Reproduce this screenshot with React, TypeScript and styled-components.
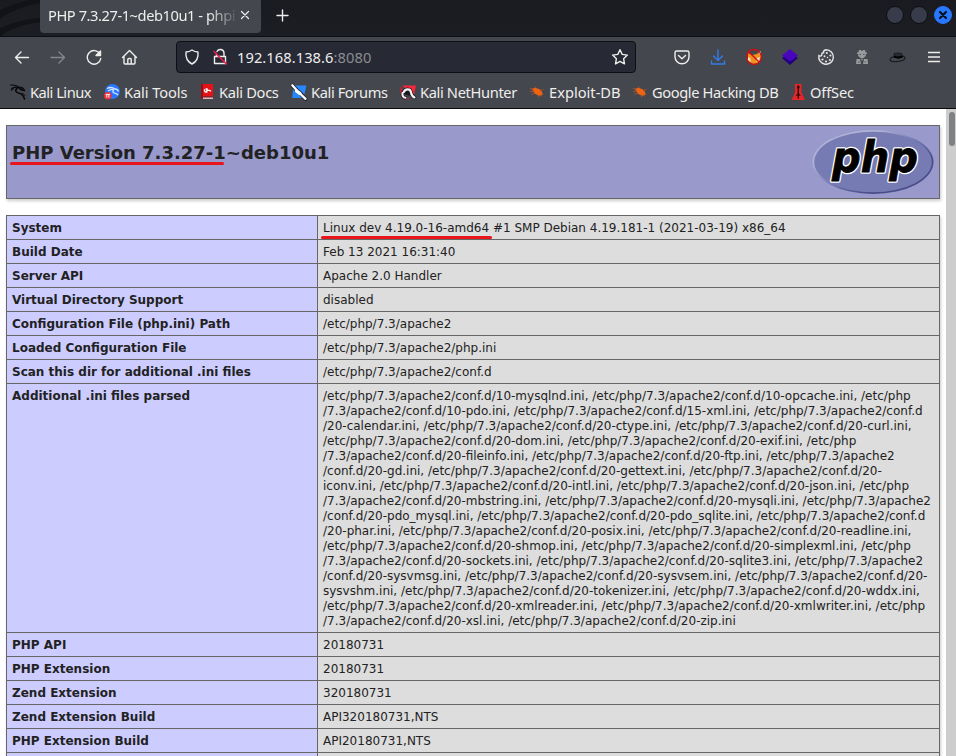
import React from "react";
import styled, { createGlobalStyle } from "styled-components";

const GlobalStyle = createGlobalStyle`
  * { box-sizing: border-box; }
  html, body { margin: 0; padding: 0; overflow: hidden; background: #fff; }
  svg { display: block; flex: none; overflow: visible; }
`;

const Browser = styled.div`
  width: 956px;
  height: 756px;
  display: flex;
  flex-direction: column;
  overflow: hidden;
  background: #fff;
`;

const TabBar = styled.header`
  height: 37px;
  flex: none;
  display: flex;
  align-items: flex-start;
  padding-left: 40px;
  border-bottom: 1px solid #0d0e11;
  background:
    radial-gradient(ellipse 90px 36px at 78px 34px, transparent 95%, #121317 97%, #121317 108%, transparent 110%) 0 0 / 40px 37px no-repeat,
    radial-gradient(ellipse 66px 26px at 60px 46px, transparent 95%, #121317 98%, #121317 112%, transparent 115%) 0 0 / 40px 37px no-repeat,
    linear-gradient(#191b20, #1d1e23);
  font-family: "Noto Sans", sans-serif;
`;

const Tab = styled.div`
  width: 221px;
  height: 33px;
  display: flex;
  align-items: center;
  padding: 0 11px 3px 8px;
  gap: 4px;
  background: #45474e;
  border-radius: 0 0 4px 4px;
  color: #eeeeec;
`;

const TabTitle = styled.span`
  width: 188px;
  white-space: nowrap;
  font-size: 14.67px;
  line-height: 24px;
  letter-spacing: -0.44px;
  mask-image: linear-gradient(90deg, #000 160px, transparent 191px);
`;

const NewTab = styled.div`
  padding: 9px 0 0 15px;
`;

const WindowControls = styled.div`
  display: flex;
  gap: 6px;
  margin-left: auto;
  padding: 6px 4px 0 0;
`;

const WindowButton = styled.span<{ $close?: boolean }>`
  width: 18px;
  height: 18px;
  display: grid;
  place-items: center;
  border-radius: 50%;
  background: ${(p) => (p.$close ? "#2777ff" : "#383c4a")};
  border: 1px solid ${(p) => (p.$close ? "#2777ff" : "#0d0e12")};
`;

const Toolbar = styled.nav`
  height: 41px;
  flex: none;
  display: flex;
  align-items: center;
  padding: 0 13px 1px 13px;
  background: #45474e;
  color: #eeeeec;
`;

const NavButtons = styled.div`
  width: 163px;
  display: flex;
  gap: 18px;
`;

const AddressBar = styled.div`
  width: 460px;
  height: 32px;
  display: flex;
  align-items: center;
  padding: 0 6px 0 7px;
  border: 1px solid #0e0f13;
  border-radius: 4px;
  background: #272935;
  font: 14.67px/24px "Noto Sans", sans-serif;
`;

const Url = styled.span`
  flex: 1;
  padding: 0 0 1px 7px;
  white-space: nowrap;
  letter-spacing: 0.07px;
`;

const Port = styled.span`
  color: #8b8c91;
`;

const LockSlot = styled.span`
  padding-left: 10px;
`;

const Extensions = styled.div`
  display: flex;
  gap: 18px;
  margin-left: auto;
`;

const Bookmarks = styled.nav`
  height: 31px;
  flex: none;
  display: flex;
  padding: 0 9px 2px 10px;
  background: #45474e;
  border-bottom: 1px solid #0b0b0d;
  color: #eeeeec;
`;

const Bookmark = styled.span<{ $width: number; $tracking: number }>`
  width: ${(p) => p.$width}px;
  flex: none;
  display: flex;
  align-items: center;
  gap: 4px;
  white-space: nowrap;
  font: 14.67px/24px "Noto Sans", sans-serif;
  letter-spacing: ${(p) => p.$tracking}px;
`;

const Viewport = styled.main`
  flex: 1;
  min-height: 0;
  display: flex;
`;

const Page = styled.div`
  width: 946px;
  padding: 16px 6px 0;
  color: #222;
  font: 12px/15px "DejaVu Sans", sans-serif;
`;

const Scrollbar = styled.div`
  width: 10px;
  padding: 3px 1px 0 3px;
  background: #cdcdcd;
`;

const ScrollThumb = styled.div`
  height: 34px;
  border-radius: 3px;
  background: #7e8282;
`;

const Banner = styled.section`
  width: 934px;
  height: 74px;
  display: flex;
  justify-content: space-between;
  align-items: flex-start;
  padding: 4px 5px;
  border: 1px solid #666;
  background: #99c;
  box-shadow: 1px 2px 3px #ccc;
`;

const Title = styled.h1`
  position: relative;
  margin: 12px 0 0;
  font-size: 18px;
  line-height: 22px;
  white-space: nowrap;
`;

const Underline = styled.span<{ $width: number; $offset: number }>`
  position: absolute;
  left: -2px;
  top: ${(p) => p.$offset}px;
  width: ${(p) => p.$width}px;
  height: 3px;
  border-radius: 2px;
  background: #e8151b;
`;

const InfoTable = styled.div`
  width: 934px;
  margin-top: 16px;
  border: 1px solid #666;
  border-bottom: 0;
  box-shadow: 1px 2px 3px #ccc;
`;

const InfoRow = styled.div`
  display: grid;
  grid-template-columns: 311px 1fr;
  border-bottom: 1px solid #666;
`;

const Label = styled.div`
  padding: 5px 5px 3px;
  border-right: 1px solid #666;
  background: #ccf;
  font-weight: bold;
`;

const Value = styled.div`
  padding: 5px 5px 3px;
  background: #ddd;
  white-space: pre;
`;

const Marked = styled.span`
  position: relative;
`;

type StrokeIconProps = { color?: string; size?: number; children: React.ReactNode };

const StrokeIcon = ({ color = "#eeeeec", size = 18, children }: StrokeIconProps) => (
  <svg width={size} height={size} viewBox={`0 0 ${size} ${size}`} fill="none" stroke={color} strokeWidth="1.4" strokeLinecap="round" strokeLinejoin="round">
    {children}
  </svg>
);

const DragonIcon = () => (
  <svg width="16" height="16" viewBox="0 0 16 16" fill="none" stroke="#08090a" strokeLinecap="round" strokeLinejoin="round">
    <path d="M.5 1C4 .8 8 1.800 10 3.800" strokeWidth="1.100" />
    <path d="M1.500 4.800C4 2.800 7 2.800 9.500 4" strokeWidth="1.100" />
    <path d="M7 4.500C4.800 6 5.500 8.500 8.500 9c3.500.5 5 2 6 6" strokeWidth="1.600" />
    <path d="M9 4c2-1 4-.5 5.500 2.500l-2.500-.5-2-1" strokeWidth="1.500" />
    <path d="M1 6.500 3.500 5M12 9.500c1.500.3 2.500 1 3 2" strokeWidth=".9" />
  </svg>
);

const ToolsIcon = () => (
  <svg width="16" height="16" viewBox="0 0 16 16">
    <circle cx="8.500" cy="7.500" r="7.400" fill="#2777ff" />
    <path d="M3 4.500c3-1.500 6-1 8 .5 2 0 3 1 3.500 2.500M4 7c3-2 5-1.500 5.500-1-1.500 2 0 3 2 3.300 1.500.3 2 1 2.500 2" fill="none" stroke="#d7e7ff" strokeWidth="1.300" />
    <circle cx="3.800" cy="11.800" r="3.800" fill="#ee3039" />
    <path d="M1.600 10.400h4.400M2.800 10.400v3.300M4.900 10.400v3.300" fill="none" stroke="#fff" strokeWidth=".9" />
  </svg>
);

const DocsIcon = () => (
  <svg width="16" height="16" viewBox="0 0 16 16">
    <path d="M2 0h12v12.500H2z" fill="#e51217" />
    <path d="M2 0h2v15H2zM2 12.500h12v1H2z" fill="#951018" />
    <path d="M4 13.500h10v1.500H4z" fill="#e6bbc0" />
    <path d="M5.500 5.200v1.600q0 1.200 1.500 1.200h.8V6.300h2.400q1.500 0 1.500 1.200M6.500 5h2.200" fill="none" stroke="#fff" strokeWidth="1.300" />
  </svg>
);

const ForumsIcon = () => (
  <svg width="16" height="16" viewBox="0 0 16 16" strokeLinecap="round">
    <path d="M2.500 1.500h13L12.500 14H1.200z" fill="#2688ff" />
    <path d="M1.500 1.500 5.500 6l4 3.500L14.500 15" fill="none" stroke="#20242c" strokeWidth="4" />
    <path d="M1.300 1.300 5.500 6M5 7l4 3M9.500 10l5 4.800" fill="none" stroke="#fff" strokeWidth="2.300" />
    <path d="M5.500 6.800 9 9.500" stroke="#fff" strokeWidth="3.200" />
  </svg>
);

const NetHunterIcon = () => (
  <svg width="16" height="16" viewBox="0 0 16 16" fill="none" strokeLinecap="round">
    <path d="M2.500 1.500h13.500L13.500 13 9 8z" fill="#f7263b" />
    <path d="M1.500 3.500C.5 7 .5 11 4 14.500h4" stroke="#db1939" strokeWidth="1.500" />
    <path d="M3.800 8C5.500 4.300 10.500 4.500 11 8.500c.3 2.500 1.800 4 3.500 5M2.500 9c-.5 3 1 4.800 3 4.700M6 8.800l3 1" stroke="#191a20" strokeWidth="3.600" />
    <path d="M3.800 8C5.500 4.300 10.500 4.500 11 8.500c.3 2.500 1.800 4 3.500 5M2.500 9c-.5 3 1 4.800 3 4.700" stroke="#f6f3f4" strokeWidth="2.100" />
  </svg>
);

const BugIcon = () => (
  <svg width="16" height="16" viewBox="0 0 16 16">
    <path d="M3 4.800 6.500 3.700l4 1.500 2.500 2.500.3 3.300-3.300.7-4.200-2z" fill="#ee6412" />
    <path d="M1 4.500 5 6M6 2.500l1.500 2M11 6.500l3.500-1M12.500 9l2 1M9 10.500l1 3M6 8.500l-3.500 2M5 7l-4 .5M12 10.500l.5 2" stroke="#b95829" strokeWidth=".8" fill="none" />
  </svg>
);

const OffSecIcon = () => (
  <svg width="16" height="16" viewBox="0 0 16 16">
    <path d="M5 0h6.500v8.500L15 16H1.500L5 8.500z" fill="#e52528" />
    <path d="M7.400 1.500h1.800l.5 2-.7 1.200v4.500l1.800 2.800-2-.4.3 2.900H7.500l.2-2.900-2 .4 1.900-2.800V4.700l-.7-1.200z" fill="#2b090b" />
  </svg>
);

const PhpLogo = () => (
  <svg width="122" height="64" viewBox="0 0 122 64">
    <defs>
      <linearGradient id="rim" x1="0" y1="0" x2="1" y2="1">
        <stop offset="0" stopColor="#aeb2d5" />
        <stop offset=".28" stopColor="#aeb2d5" />
        <stop offset=".5" stopColor="#777bb3" />
        <stop offset=".72" stopColor="#484c89" />
        <stop offset="1" stopColor="#484c89" />
      </linearGradient>
    </defs>
    <ellipse cx="61" cy="32" rx="60.500" ry="32" fill="url(#rim)" />
    <ellipse cx="61" cy="32" rx="58.800" ry="30.300" fill="#777bb3" />
    <g fontFamily="DejaVu Sans" fontSize="42" fontStyle="italic" fontWeight="bold">
      <text x="20" y="41.500" fill="#fff" stroke="#fff" strokeWidth="3.600" strokeLinejoin="round" textLength="86" lengthAdjust="spacingAndGlyphs">php</text>
      <text x="20" y="41.500" fill="#000" stroke="#000" strokeWidth=".8" textLength="86" lengthAdjust="spacingAndGlyphs" aria-hidden="true">php</text>
    </g>
  </svg>
);

const bookmarks = [
  { label: "Kali Linux", width: 94, tracking: -0.5, icon: <DragonIcon /> },
  { label: "Kali Tools", width: 95, tracking: -0.1, icon: <ToolsIcon /> },
  { label: "Kali Docs", width: 92, tracking: -0.3, icon: <DocsIcon /> },
  { label: "Kali Forums", width: 109, tracking: -0.4, icon: <ForumsIcon /> },
  { label: "Kali NetHunter", width: 129, tracking: -0.36, icon: <NetHunterIcon /> },
  { label: "Exploit-DB", width: 103, tracking: 0, icon: <BugIcon /> },
  { label: "Google Hacking DB", width: 158, tracking: -0.4, icon: <BugIcon /> },
  { label: "OffSec", width: 80, tracking: -0.15, icon: <OffSecIcon /> },
];

const iniFiles = [
  "/etc/php/7.3/apache2/conf.d/10-mysqlnd.ini, /etc/php/7.3/apache2/conf.d/10-opcache.ini, /etc/php",
  "/7.3/apache2/conf.d/10-pdo.ini, /etc/php/7.3/apache2/conf.d/15-xml.ini, /etc/php/7.3/apache2/conf.d",
  "/20-calendar.ini, /etc/php/7.3/apache2/conf.d/20-ctype.ini, /etc/php/7.3/apache2/conf.d/20-curl.ini,",
  "/etc/php/7.3/apache2/conf.d/20-dom.ini, /etc/php/7.3/apache2/conf.d/20-exif.ini, /etc/php",
  "/7.3/apache2/conf.d/20-fileinfo.ini, /etc/php/7.3/apache2/conf.d/20-ftp.ini, /etc/php/7.3/apache2",
  "/conf.d/20-gd.ini, /etc/php/7.3/apache2/conf.d/20-gettext.ini, /etc/php/7.3/apache2/conf.d/20-",
  "iconv.ini, /etc/php/7.3/apache2/conf.d/20-intl.ini, /etc/php/7.3/apache2/conf.d/20-json.ini, /etc/php",
  "/7.3/apache2/conf.d/20-mbstring.ini, /etc/php/7.3/apache2/conf.d/20-mysqli.ini, /etc/php/7.3/apache2",
  "/conf.d/20-pdo_mysql.ini, /etc/php/7.3/apache2/conf.d/20-pdo_sqlite.ini, /etc/php/7.3/apache2/conf.d",
  "/20-phar.ini, /etc/php/7.3/apache2/conf.d/20-posix.ini, /etc/php/7.3/apache2/conf.d/20-readline.ini,",
  "/etc/php/7.3/apache2/conf.d/20-shmop.ini, /etc/php/7.3/apache2/conf.d/20-simplexml.ini, /etc/php",
  "/7.3/apache2/conf.d/20-sockets.ini, /etc/php/7.3/apache2/conf.d/20-sqlite3.ini, /etc/php/7.3/apache2",
  "/conf.d/20-sysvmsg.ini, /etc/php/7.3/apache2/conf.d/20-sysvsem.ini, /etc/php/7.3/apache2/conf.d/20-",
  "sysvshm.ini, /etc/php/7.3/apache2/conf.d/20-tokenizer.ini, /etc/php/7.3/apache2/conf.d/20-wddx.ini,",
  "/etc/php/7.3/apache2/conf.d/20-xmlreader.ini, /etc/php/7.3/apache2/conf.d/20-xmlwriter.ini, /etc/php",
  "/7.3/apache2/conf.d/20-xsl.ini, /etc/php/7.3/apache2/conf.d/20-zip.ini",
].join("\n");

const rows: [string, React.ReactNode][] = [
  ["System", <Marked key="system">Linux dev 4.19.0-16-amd64 #1 SMP Debian 4.19.181-1 (2021-03-19) x86_64<Underline $width={171} $offset={15} /></Marked>],
  ["Build Date", "Feb 13 2021 16:31:40"],
  ["Server API", "Apache 2.0 Handler"],
  ["Virtual Directory Support", "disabled"],
  ["Configuration File (php.ini) Path", "/etc/php/7.3/apache2"],
  ["Loaded Configuration File", "/etc/php/7.3/apache2/php.ini"],
  ["Scan this dir for additional .ini files", "/etc/php/7.3/apache2/conf.d"],
  ["Additional .ini files parsed", iniFiles],
  ["PHP API", "20180731"],
  ["PHP Extension", "20180731"],
  ["Zend Extension", "320180731"],
  ["Zend Extension Build", "API320180731,NTS"],
  ["PHP Extension Build", "API20180731,NTS"],
  ["", ""],
];

export default function App() {
  return (
    <Browser>
      <GlobalStyle />
      <TabBar>
        <Tab>
          <TabTitle>PHP 7.3.27-1~deb10u1 - phpin</TabTitle>
          <StrokeIcon size={10}><path d="M1.500 1.500l7 7M8.500 1.500l-7 7" strokeWidth="1.200" /></StrokeIcon>
        </Tab>
        <NewTab><StrokeIcon size={13}><path d="M6.500 1v11M1 6.500h11" /></StrokeIcon></NewTab>
        <WindowControls>
          <WindowButton />
          <WindowButton />
          <WindowButton $close>
            <StrokeIcon color="#07101e" size={8}><path d="M1 1l6 6M7 1 1 7" strokeWidth="2.200" /></StrokeIcon>
          </WindowButton>
        </WindowControls>
      </TabBar>
      <Toolbar>
        <NavButtons>
          <StrokeIcon><path d="M15.500 9.500H2.500M8 4 2.500 9.500 8 15" /></StrokeIcon>
          <StrokeIcon color="#85868a"><path d="M2 9.500h13.500M10 4l5.500 5.500L10 15" /></StrokeIcon>
          <StrokeIcon><path d="M15 6A6.800 6.800 0 1 0 15.800 10.500" /><path d="M15.500 3v4.500H11z" fill="#eeeeec" /></StrokeIcon>
          <StrokeIcon><path d="M1.500 9.500 8.500 2.500l7 7M3 8.500V15q0 1 1 1h9q1 0 1-1V8.500M6.800 16v-4.500q0-1 1-1h1.400q1 0 1 1V16" /></StrokeIcon>
        </NavButtons>
        <AddressBar>
          <StrokeIcon size={16}><path d="M8 1c2 1.500 4 2 6 2 .5 5.500-1 9.500-6 12-5-2.500-6.500-6.500-6-12 2 0 4-.5 6-2z" /></StrokeIcon>
          <LockSlot>
            <StrokeIcon size={20}>
              <path d="M7 4.500a3.700 3.700 0 0 1 7 1.500v3M4.500 9.500h11v7h-11zM6.500 7v2" />
              <path d="M4 4.500 16.500 17" stroke="#f51648" strokeWidth="1.600" />
            </StrokeIcon>
          </LockSlot>
          <Url>192.168.138.6<Port>:8080</Port></Url>
          <StrokeIcon size={18}><path d="M9 1.700l2.200 4.700 5.200.7-3.800 3.600.9 5.200L9 13.400l-4.500 2.500.9-5.200-3.800-3.600 5.200-.7z" /></StrokeIcon>
        </AddressBar>
        <Extensions>
          <StrokeIcon><path d="M3.700 3h10.600q1.700 0 1.700 1.700v4a7 7 0 0 1-14 0v-4Q2 3 3.700 3zM5.500 7.500 9 10.700l3.500-3.200" /></StrokeIcon>
          <StrokeIcon color="#307de8"><path d="M9 2v10M4.500 8 9 12.500 13.500 8M2.500 13v3h13v-3" /></StrokeIcon>
          <svg width="18" height="18" viewBox="0 0 18 18">
            <path d="M3 5l4 2 5-1 3-3 1 6-2 6-6 1-5-3z" fill="#ef911c" />
            <path d="M3 9l2 1 1 4-3-2M12 10l3-1-1 4-3 1M14 5l2-2v5z" fill="#eee1c4" />
            <circle cx="9" cy="9" r="7.500" fill="none" stroke="#cb1017" strokeWidth="1.400" /><path d="M3.700 3.700 14.300 14.300" stroke="#cb1017" strokeWidth="1.400" />
          </svg>
          <svg width="18" height="18" viewBox="0 0 18 18"><path d="M1 10l8-5 8 5-8 7z" fill="#21007f" /><path d="M1 7.500 9 1l8 6.500-8 6z" fill="#4906bd" /></svg>
          <svg width="18" height="18" viewBox="0 0 18 18">
            <path d="M9 1.700A7.300 7.300 0 1 1 1.900 7.500q2 1.200 3-.5-.7-2 1.600-2.200Q6 2.500 9 1.700z" fill="none" stroke="#e4e4e4" strokeWidth="1.400" />
            <g fill="#e4e4e4"><circle cx="9.800" cy="5" r="1.100" /><circle cx="7.500" cy="8.200" r="1" /><circle cx="10.500" cy="9.500" r=".8" /><circle cx="13.400" cy="7.500" r="1.100" /><circle cx="5.500" cy="11.500" r="1.100" /><circle cx="9" cy="13.500" r="1.100" /><circle cx="12.800" cy="12" r="1.100" /></g>
          </svg>
          <svg width="18" height="18" viewBox="0 0 18 18"><path d="M6 2h1.500L9 3l1.500-1H12l.7 2.500H14V6h-1.200v2L10.500 10 9 10.500 7.500 10 5.200 8V6H4V4.500h1.300z" fill="#999a9c" /><path d="M3.500 11H7l1 5H3zM11 11h3.500l.5 5h-5zM8 11h2l-1 2z" fill="#999a9c" /><path d="M6.500 6.500H8M10 6.500h1.500M5 14h1.500M11.500 14H13" stroke="#55575d" /></svg>
          <svg width="18" height="18" viewBox="0 0 18 18"><ellipse cx="8.500" cy="10.700" rx="7.500" ry="2.800" transform="rotate(-7 8.500 10.700)" fill="#45474e" stroke="#15161a" /><path d="M5 5.500q4-1.500 8 0l.5 3.500q-4 2.500-8.500 0z" fill="#2a2b30" stroke="#151619" strokeWidth=".6" /><path d="M5 8.500q4 2 8.500 0" fill="none" stroke="#000" strokeWidth="2" /></svg>
          <StrokeIcon><path d="M3 4.500h12M3 9h12M3 13.500h12" strokeLinecap="butt" /></StrokeIcon>
        </Extensions>
      </Toolbar>
      <Bookmarks>
        {bookmarks.map((b) => (
          <Bookmark key={b.label} $width={b.width} $tracking={b.tracking}>{b.icon}{b.label}</Bookmark>
        ))}
      </Bookmarks>
      <Viewport>
        <Page>
          <Banner>
            <Title>PHP Version 7.3.27-1~deb10u1<Underline $width={214} $offset={20} /></Title>
            <PhpLogo />
          </Banner>
          <InfoTable>
            {rows.map(([label, value], i) => (
              <InfoRow key={i}><Label>{label}</Label><Value>{value}</Value></InfoRow>
            ))}
          </InfoTable>
        </Page>
        <Scrollbar><ScrollThumb /></Scrollbar>
      </Viewport>
    </Browser>
  );
}
